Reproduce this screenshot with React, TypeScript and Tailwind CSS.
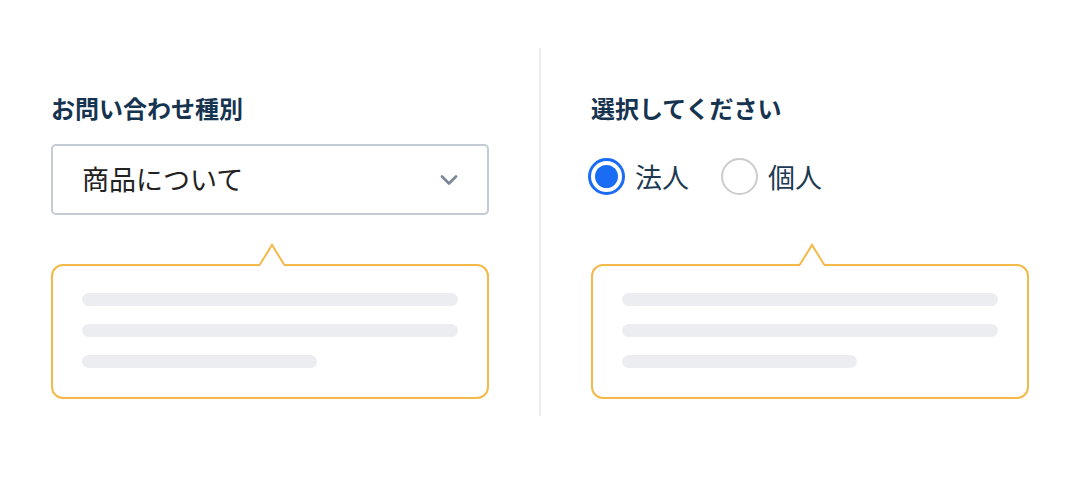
import React, { useState } from "react";
import { ChevronDown } from "lucide-react";

const font = { fontFamily: '"Noto Sans CJK JP", "Noto Sans", sans-serif' };

// Tooltip-like bubble with skeleton lines
const Bubble: React.FC = () => (
  <div className="relative mt-[49px] h-[135px] w-full rounded-[12px] border-2 border-[#f5b94a] bg-white px-[29px] pt-[27px]">
    <svg
      className="absolute left-[204px] top-[-23px]"
      width="30"
      height="25"
      viewBox="0 0 30 25"
    >
      <path d="M2 23 L15 2 L28 23" fill="white" stroke="#f5b94a" strokeWidth="2" strokeLinejoin="miter" />
      <rect x="3" y="22" width="24" height="4" fill="white" />
    </svg>
    <div className="flex flex-col gap-[18px]">
      <div className="h-[13px] w-[376px] rounded-full bg-[#ebedf0]" />
      <div className="h-[13px] w-[376px] rounded-full bg-[#ebedf0]" />
      <div className="h-[13px] w-[235px] rounded-full bg-[#ebedf0]" />
    </div>
  </div>
);

const Radio: React.FC<{ checked: boolean; label: string; onClick: () => void }> = ({ checked, label, onClick }) => (
  <button onClick={onClick} className="flex items-center gap-[10px]">
    {checked ? (
      <span className="flex h-[37px] w-[37px] items-center justify-center rounded-full border-[3px] border-[#1a6cf5]">
        <span className="h-[23px] w-[23px] rounded-full bg-[#1a6cf5]" />
      </span>
    ) : (
      <span className="h-[37px] w-[37px] rounded-full border-2 border-[#cccccc]" />
    )}
    <span className="text-[27px] leading-none text-[#1d3a52]">{label}</span>
  </button>
);

export default function App() {
  const [type, setType] = useState("法人");

  return (
    <div className="h-[480px] w-[1080px] bg-white" style={font}>
      <div className="flex px-[51px] pt-[48px]">
        <div className="w-[438px] pt-[44px]">
          <h2 className="h-[32px] text-[24px] font-bold leading-[32px] text-[#163450]">お問い合わせ種別</h2>
          <div className="mt-[20px] flex h-[71px] items-center justify-between rounded-[5px] border-2 border-[#c3cbd6] pl-[29px] pr-[24px]">
            <span className="text-[27px] text-[#222222]">商品について</span>
            <ChevronDown size={28} strokeWidth={2.4} className="text-[#7d8797]" />
          </div>
          <Bubble />
        </div>

        <div className="mx-[50px] h-[368px] w-[2px] bg-[#ececec]" />

        <div className="w-[438px] pt-[44px]">
          <h2 className="h-[32px] text-[24px] font-bold leading-[32px] text-[#163450]">選択してください</h2>
          <div className="-ml-[3px] mt-[20px] flex h-[71px] items-start gap-[32px] pt-[14px]">
            <Radio checked={type === "法人"} label="法人" onClick={() => setType("法人")} />
            <Radio checked={type === "個人"} label="個人" onClick={() => setType("個人")} />
          </div>
          <Bubble />
        </div>
      </div>
    </div>
  );
}
